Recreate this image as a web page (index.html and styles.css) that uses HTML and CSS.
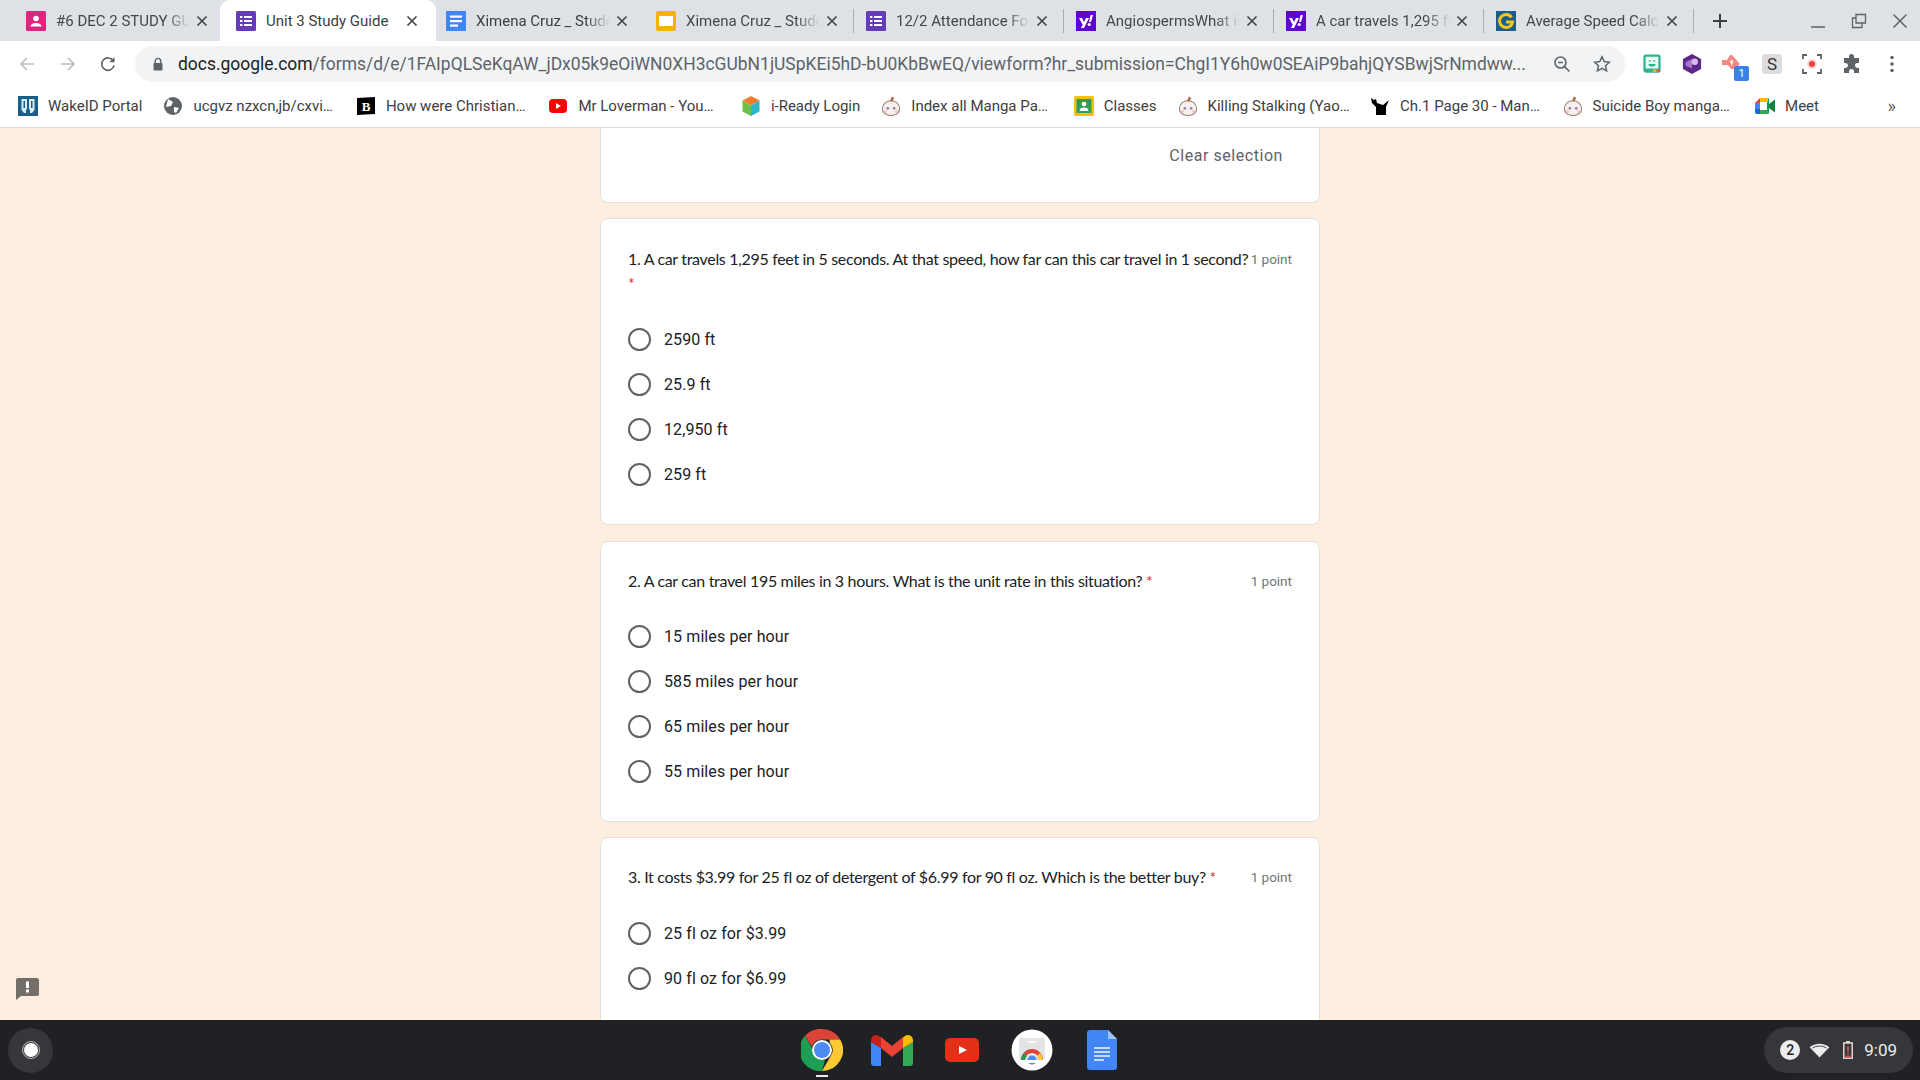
FILE: index.html
```html
<!DOCTYPE html>
<html>
<head>
    <meta charset="utf-8">
    <title>Unit 3 Study Guide</title>
    <link rel="stylesheet" href="styles.css">
</head>
<body>
<svg class="sprite" width="0" height="0">
    <symbol id="i-forms" viewBox="0 0 20 20"><rect width="20" height="20" rx="1.5" fill="#673ab7"/><g fill="#fff"><rect x="4" y="5" width="2.4" height="2"/><rect x="8" y="5" width="8" height="2"/><rect x="4" y="9" width="2.4" height="2"/><rect x="8" y="9" width="8" height="2"/><rect x="4" y="13" width="2.4" height="2"/><rect x="8" y="13" width="8" height="2"/></g></symbol>
    <symbol id="i-docs" viewBox="0 0 20 20"><rect width="20" height="24" y="-2" rx="2" fill="#4285f4"/><g fill="#fff"><rect x="4" y="4.5" width="12" height="2.2"/><rect x="4" y="9" width="12" height="2.2"/><rect x="4" y="13.5" width="8" height="2.2"/></g></symbol>
    <symbol id="i-yahoo" viewBox="0 0 20 20"><rect width="20" height="20" fill="#5f01d1"/><path d="M3 7h3l2 4 2-4h3l-5 10H5l1.7-3.2z" fill="#fff"/><path d="M14.5 4H17l-2 7h-2z" fill="#fff"/><circle cx="13.2" cy="13.5" r="1.6" fill="#fff"/></symbol>
    <symbol id="i-blob" viewBox="0 0 22 22"><path d="M11 5c5 0 9.500 4 9.500 9 0 5-4.500 7.500-9.500 7.500S1.500 19 1.500 14c0-5 4.500-9 9.500-9z" fill="#f8f0ec" stroke="#a08c83" stroke-width="1.300"/><path d="M10 5.500l2-5 2.500 1.500-2 4z" fill="#a9654b"/><circle cx="7.500" cy="13.500" r="1.500" fill="#8d83ad"/><circle cx="14.500" cy="13.500" r="1.500" fill="#8d83ad"/><circle cx="5" cy="17" r="1.600" fill="#f0c8c8"/><circle cx="17" cy="17" r="1.600" fill="#f0c8c8"/></symbol>
    <symbol id="i-close" viewBox="0 0 12 12"><path d="M1.5 1.5l9 9M10.5 1.5l-9 9" stroke="#45474a" stroke-width="1.7" fill="none"/></symbol>
</svg>

<div class="tabstrip">
    <div class="tab">
        <svg class="fav" viewBox="0 0 20 20"><rect width="20" height="20" rx="1.5" fill="#e0247f"/><circle cx="10" cy="7.5" r="2.8" fill="#fff"/><path d="M4.5 15.5c0-2.5 3-3.5 5.500-3.500s5.500 1 5.500 3.500z" fill="#fff"/></svg>
        <span class="tab-title">#6 DEC 2 STUDY GUIDE</span>
        <svg class="tab-x"><use href="#i-close"/></svg>
    </div>
    <div class="tab active">
        <svg class="fav"><use href="#i-forms"/></svg>
        <span class="tab-title">Unit 3 Study Guide</span>
        <svg class="tab-x"><use href="#i-close"/></svg>
    </div>
    <div class="tab no-sep">
        <svg class="fav"><use href="#i-docs"/></svg>
        <span class="tab-title">Ximena Cruz _ Student</span>
        <svg class="tab-x"><use href="#i-close"/></svg>
    </div>
    <div class="tab">
        <svg class="fav" viewBox="0 0 20 20"><rect width="20" height="20" y="0" rx="2" fill="#f4b400"/><rect x="3" y="5" width="14" height="10" rx="1" fill="#fff"/></svg>
        <span class="tab-title">Ximena Cruz _ Student</span>
        <svg class="tab-x"><use href="#i-close"/></svg>
    </div>
    <div class="tab">
        <svg class="fav"><use href="#i-forms"/></svg>
        <span class="tab-title">12/2 Attendance Form</span>
        <svg class="tab-x"><use href="#i-close"/></svg>
    </div>
    <div class="tab">
        <svg class="fav"><use href="#i-yahoo"/></svg>
        <span class="tab-title">AngiospermsWhat is</span>
        <svg class="tab-x"><use href="#i-close"/></svg>
    </div>
    <div class="tab">
        <svg class="fav"><use href="#i-yahoo"/></svg>
        <span class="tab-title">A car travels 1,295 feet</span>
        <svg class="tab-x"><use href="#i-close"/></svg>
    </div>
    <div class="tab">
        <svg class="fav" viewBox="0 0 20 20"><rect width="20" height="20" fill="#1b5e8c"/><path d="M15.500 6.500A6.500 6.500 0 1 0 16.500 11H10" fill="none" stroke="#f5c518" stroke-width="3"/></svg>
        <span class="tab-title">Average Speed Calculator</span>
        <svg class="tab-x"><use href="#i-close"/></svg>
    </div>
    <svg class="new-tab" viewBox="0 0 16 16"><path d="M8 1v14M1 8h14" stroke="#3c4043" stroke-width="2"/></svg>
    <div class="win-controls">
        <svg viewBox="0 0 16 16"><path d="M1 14h14" stroke="#5f6368" stroke-width="1.500"/></svg>
        <svg viewBox="0 0 16 16"><path d="M5 1.500h9.500V10H5zM5 5H1.500v9.500H11V10" fill="none" stroke="#5f6368" stroke-width="1.300"/></svg>
        <svg viewBox="0 0 16 16"><path d="M1.500 1.500l13 13M14.500 1.500l-13 13" stroke="#5f6368" stroke-width="1.500"/></svg>
    </div>
</div>

<div class="toolbar">
    <div class="nav-buttons">
        <svg viewBox="0 0 16 16"><path d="M15 8H2M8 2L2 8l6 6" fill="none" stroke="#babcbe" stroke-width="1.600"/></svg>
        <svg viewBox="0 0 16 16"><path d="M1 8h13M8 2l6 6-6 6" fill="none" stroke="#babcbe" stroke-width="1.600"/></svg>
        <svg viewBox="0 0 16 16"><path d="M13.300 5A6.200 6.200 0 1 0 14 9.300" fill="none" stroke="#5f6368" stroke-width="1.600"/><path d="M14.500 1v5.200H9.300z" fill="#5f6368"/></svg>
    </div>
    <div class="omnibox">
        <svg class="lock" viewBox="0 0 12 14"><path d="M3.200 6V4.200a2.800 2.800 0 0 1 5.600 0V6" fill="none" stroke="#5f6368" stroke-width="1.400"/><rect x="1.500" y="6" width="9" height="7.500" rx="1" fill="#5f6368"/></svg>
        <span class="url"><span class="host">docs.google.com</span>/forms/d/e/1FAIpQLSeKqAW_jDx05k9eOiWN0XH3cGUbN1jUSpKEi5hD-bU0KbBwEQ/viewform?hr_submission=ChgI1Y6h0w0SEAiP9bahjQYSBwjSrNmdww...</span>
        <svg class="omni-icon" viewBox="0 0 18 18"><circle cx="7.500" cy="7.500" r="5.500" fill="none" stroke="#5f6368" stroke-width="1.600"/><path d="M11.500 11.500l5 5M5 7.500h5" stroke="#5f6368" stroke-width="1.600"/></svg>
        <svg class="omni-icon" viewBox="0 0 18 18"><path d="M9 1.800l2.200 4.800 5.200.6-3.900 3.500 1.100 5.200L9 13.300l-4.600 2.600 1.100-5.200-3.900-3.500 5.200-.6z" fill="none" stroke="#5f6368" stroke-width="1.500"/></svg>
    </div>
    <div class="extensions">
        <svg viewBox="0 0 20 22"><rect x="0.500" y="0.500" width="19" height="20" rx="2.500" fill="#2bb58f"/><rect x="3" y="3" width="14" height="13" rx="1" fill="#e9f8f3"/><circle cx="7.500" cy="7.500" r="1" fill="#2bb58f"/><circle cx="12.500" cy="7.500" r="1" fill="#2bb58f"/><path d="M6 11h8c0 2-2 3-4 3s-4-1-4-3z" fill="#2bb58f"/><rect x="11" y="17" width="4" height="3" fill="#f3b32a"/><rect x="15" y="17" width="4" height="3" fill="#e8594a"/></svg>
        <svg viewBox="0 0 22 22"><path d="M11 0l10 5.500v11L11 22 1 16.500v-11z" fill="#5b2a86"/><path d="M4 9l7-3.500V16l-7-3z" fill="#a874cf"/><circle cx="14" cy="8.500" r="3.500" fill="#d7bdea"/></svg>
        <div class="ext-badged">
            <svg viewBox="0 0 20 20"><path d="M0 6h5l3-5h2l8 9-5 5H9l-3-4H0z" fill="#f28b82"/><path d="M8 6.500h3.500L9.500 12z" fill="#fff"/></svg>
            <span class="ext-badge">1</span>
        </div>
        <div class="ext-s">S</div>
        <svg viewBox="0 0 20 20"><path d="M1 5V1h4M15 1h4v4M19 15v4h-4M5 19H1v-4" fill="none" stroke="#5f6368" stroke-width="1.800"/><circle cx="10" cy="10" r="5" fill="#fbd5d2"/><circle cx="10" cy="10" r="3" fill="#e8453c"/></svg>
        <svg viewBox="0 0 20 20"><path d="M7 2.500a2.500 2.500 0 0 1 5 0V4h5v5h-1.500a2.500 2.500 0 0 0 0 5H17v5h-5v-1.500a2.500 2.500 0 0 0-5 0V19H2v-5h1.500a2.500 2.500 0 0 0 0-5H2V4h5z" fill="#5f6368"/></svg>
        <svg class="ext-menu" viewBox="0 0 4 18"><circle cx="2" cy="2.500" r="1.800" fill="#5f6368"/><circle cx="2" cy="9" r="1.800" fill="#5f6368"/><circle cx="2" cy="15.500" r="1.800" fill="#5f6368"/></svg>
    </div>
</div>

<div class="bookmarks">
    <div class="bm"><svg viewBox="0 0 20 20"><rect width="20" height="20" fill="#175e8a"/><path d="M3.500 3H9v10l-1 1v3H6l-2.500-3zM16.500 3H11v10l1 1v3h2l2.500-3z" fill="#dbe9f1"/><path d="M5.500 5h1.500v7H5.500zM13 5h1.500v7H13z" fill="#175e8a"/></svg><span>WakeID Portal</span></div>
    <div class="bm bm-long"><svg viewBox="0 0 20 20"><circle cx="10" cy="10" r="9" fill="#5f6368"/><path d="M5 3l5 3-2 4-5 1zM11 11l5 1-3 5-2-1z" fill="#fff"/></svg><span>ucgvz nzxcn,jb/cxvi…</span></div>
    <div class="bm bm-long"><svg viewBox="0 0 20 20"><path d="M1 2l18-1v17L1 19z" fill="#000"/><text x="10" y="15" text-anchor="middle" class="bm-b">B</text></svg><span>How were Christian…</span></div>
    <div class="bm bm-long"><svg viewBox="0 0 20 20"><rect x="1" y="3" width="18" height="14" rx="4" fill="#f00"/><path d="M8 7l5 3-5 3z" fill="#fff"/></svg><span>Mr Loverman - You…</span></div>
    <div class="bm"><svg viewBox="0 0 20 20"><path d="M10 0l8.500 4.500-8.500 5-8.500-5z" fill="#f47b30"/><path d="M1.500 4.500l8.500 5V20l-8.500-4.500z" fill="#6cbf4b"/><path d="M18.500 4.500l-8.500 5V20l8.500-4.500z" fill="#2fb5c9"/></svg><span>i-Ready Login</span></div>
    <div class="bm bm-long"><svg><use href="#i-blob"/></svg><span>Index all Manga Pa…</span></div>
    <div class="bm"><svg viewBox="0 0 20 20"><rect width="20" height="20" rx="1.500" fill="#f4c20d"/><rect x="2.500" y="3" width="15" height="14" fill="#2e9e5b"/><circle cx="10" cy="8" r="2.300" fill="#fff"/><path d="M5.500 15c0-2.500 2-3.500 4.500-3.500s4.500 1 4.500 3.500z" fill="#fff"/></svg><span>Classes</span></div>
    <div class="bm bm-long"><svg><use href="#i-blob"/></svg><span>Killing Stalking (Yao…</span></div>
    <div class="bm bm-long"><svg viewBox="0 0 20 20"><path d="M1 2l3 2 2-1 1 4 6 2 6-5-3 7v8H6v-8L2 7z" fill="#000"/></svg><span>Ch.1 Page 30 - Man…</span></div>
    <div class="bm bm-long"><svg><use href="#i-blob"/></svg><span>Suicide Boy manga…</span></div>
    <div class="bm"><svg viewBox="0 0 20 20"><path d="M5 2h8v4H5z" fill="#fbbc04"/><path d="M5 2L0 7h5z" fill="#ea4335"/><path d="M0 7h5v6H0z" fill="#4285f4"/><path d="M0 13h5v5H2a2 2 0 0 1-2-2z" fill="#1967d2"/><path d="M5 14h8v4H5z" fill="#34a853"/><path d="M13 2v4h-1v8h1v4a2 2 0 0 0 1-1l0-14a2 2 0 0 0-1-1z" fill="#0d9d58"/><path d="M14 8l6-4.500v13L14 12z" fill="#188038"/></svg><span>Meet</span></div>
    <span class="bm-more">»</span>
</div>

<main class="page">
    <section class="card card-clear">
        <button class="clear-btn">Clear selection</button>
    </section>

    <section class="card card-q1">
        <div class="q-head">
            <div class="q-text">1. A car travels 1,295 feet in 5 seconds. At that speed, how far can this car travel in 1 second? <span class="req">*</span></div>
            <div class="q-pts">1 point</div>
        </div>
        <div class="opts">
            <label class="opt"><span class="radio"></span>2590 ft</label>
            <label class="opt"><span class="radio"></span>25.9 ft</label>
            <label class="opt"><span class="radio"></span>12,950 ft</label>
            <label class="opt"><span class="radio"></span>259 ft</label>
        </div>
    </section>

    <section class="card">
        <div class="q-head">
            <div class="q-text">2. A car can travel 195 miles in 3 hours. What is the unit rate in this situation? <span class="req">*</span></div>
            <div class="q-pts">1 point</div>
        </div>
        <div class="opts">
            <label class="opt"><span class="radio"></span>15 miles per hour</label>
            <label class="opt"><span class="radio"></span>585 miles per hour</label>
            <label class="opt"><span class="radio"></span>65 miles per hour</label>
            <label class="opt"><span class="radio"></span>55 miles per hour</label>
        </div>
    </section>

    <section class="card card-q3">
        <div class="q-head">
            <div class="q-text">3. It costs $3.99 for 25 fl oz of detergent of $6.99 for 90 fl oz. Which is the better buy? <span class="req">*</span></div>
            <div class="q-pts">1 point</div>
        </div>
        <div class="opts">
            <label class="opt"><span class="radio"></span>25 fl oz for $3.99</label>
            <label class="opt"><span class="radio"></span>90 fl oz for $6.99</label>
        </div>
    </section>

    <svg class="feedback" viewBox="0 0 23 22"><path d="M2 0h19a2 2 0 0 1 2 2v14a2 2 0 0 1-2 2H5l-5 4V2a2 2 0 0 1 2-2z" fill="#746e68"/><rect x="10" y="3.500" width="3" height="6.500" fill="#fff"/><rect x="10" y="11.500" width="3" height="3" fill="#fff"/></svg>
</main>

<footer class="shelf">
    <div class="launcher"><span class="launcher-dot"></span></div>
    <div class="shelf-apps">
        <div class="app running">
            <svg viewBox="0 0 42 42">
                <path d="M21 0a21 21 0 0 1 18.200 10.500H21a10.500 10.500 0 0 0-10 7.300L4 6.800A21 21 0 0 1 21 0z" fill="#db4437"/>
                <path d="M39.200 10.500A21 21 0 0 1 21 42l9.100-15.700A10.500 10.500 0 0 0 29 14l-.5-3.500z" fill="#fcc934"/>
                <path d="M21 42A21 21 0 0 1 4 6.800l9 15.700A10.500 10.500 0 0 0 24 31z" fill="#1e9e55"/>
                <circle cx="21" cy="21" r="10" fill="#fff"/><circle cx="21" cy="21" r="8" fill="#4c8bf5"/>
            </svg>
        </div>
        <div class="app">
            <svg viewBox="0 0 42 32">
                <path d="M0 8v21a3 3 0 0 0 3 3h7V14z" fill="#4285f4"/>
                <path d="M32 14v18h7a3 3 0 0 0 3-3V8z" fill="#34a853"/>
                <path d="M10 3l11 9 11-9v11l-11 9-11-9z" fill="#ea4335"/>
                <path d="M0 6a5 5 0 0 1 8-4l2 1.500V14L0 8z" fill="#c5221f"/>
                <path d="M42 6a5 5 0 0 0-8-4l-2 1.500V14l10-6z" fill="#fbbc04"/>
            </svg>
        </div>
        <div class="app">
            <svg viewBox="0 0 34 24"><rect width="34" height="24" rx="5" fill="#e62f17"/><path d="M14 8l8 4-8 4z" fill="#fff"/></svg>
        </div>
        <div class="app">
            <svg viewBox="0 0 42 42">
                <circle cx="21" cy="21" r="20.500" fill="#fff"/>
                <rect x="8" y="9" width="26" height="24" fill="#e3e4e5"/>
                <rect x="17" y="12" width="8" height="1.500" fill="#fff"/>
                <path d="M10 31a11 11 0 0 1 22 0h-4a7 7 0 0 0-14 0z" fill="#db4437"/>
                <path d="M10 31a11 11 0 0 1 3-7l3 3a7 7 0 0 0-2 4z" fill="#1e9e55"/>
                <path d="M29 24a11 11 0 0 1 3 7h-4a7 7 0 0 0-2-4z" fill="#fcc934"/>
                <circle cx="21" cy="31" r="4.500" fill="#4c8bf5"/>
                <rect x="8" y="31" width="26" height="3" fill="#fff"/>
            </svg>
        </div>
        <div class="app">
            <svg viewBox="0 0 30 40">
                <path d="M3 0h18l9 9v28a3 3 0 0 1-3 3H3a3 3 0 0 1-3-3V3a3 3 0 0 1 3-3z" fill="#4285f4"/>
                <path d="M21 0l9 9h-9z" fill="#a1c2fa"/>
                <path d="M7 18h16M7 22h16M7 26h16M7 30h10" stroke="#f1f3f4" stroke-width="1.600"/>
            </svg>
        </div>
    </div>
    <div class="tray">
        <span class="tray-count">2</span>
        <svg class="tray-wifi" viewBox="0 0 22 16"><path d="M11 15.500L0.500 4.500C6 -0.500 16 -0.500 21.500 4.500z" fill="#eceded"/><path d="M3.500 5.500c4-3 11-3 15 0" fill="none" stroke="#35373b" stroke-width="1"/></svg>
        <svg class="tray-batt" viewBox="0 0 10 18"><rect x="3" y="0" width="4" height="2" fill="#e4d9d9"/><rect x="0.800" y="2" width="8.400" height="15.200" fill="none" stroke="#e4d9d9" stroke-width="1.500"/><rect x="1.500" y="14.500" width="7" height="2" fill="#c9504a"/><rect x="4.200" y="5" width="1.600" height="5.500" fill="#e25b52"/><rect x="4.200" y="11.500" width="1.600" height="1.600" fill="#e25b52"/></svg>
        <span class="tray-time">9:09</span>
    </div>
</footer>
</body>
</html>
```

FILE: styles.css
```css
* {
    box-sizing: border-box;
}
html, body {
    margin: 0;
    height: 100%;
}
body {
    display: flex;
    flex-direction: column;
    overflow: hidden;
    font-family: Roboto, "Liberation Sans", sans-serif;
    color: #202124;
    background-color: #fdeee0;
}
.sprite {
    position: absolute;
}

/* tabs */
.tabstrip {
    display: flex;
    align-items: center;
    height: 41px;
    padding-left: 14px;
    background-color: #dee1e6;
}
.tab {
    position: relative;
    display: flex;
    align-items: center;
    flex: none;
    width: 210px;
    height: 41px;
    padding: 0 16px 0 12px;
    font-size: 15px;
    color: #45474a;
}
.tab::after {
    content: "";
    position: absolute;
    right: 0;
    top: 9px;
    width: 1px;
    height: 24px;
    background-color: #a9acb0;
}
.tab.active, .tab.no-sep {
    color: #3c4043;
}
.tab.active {
    width: 216px;
    margin: 0 -2px 0 -4px;
    padding: 0 18px 0 16px;
    background-color: #fff;
    border-radius: 10px 10px 0 0;
}
.tab.active::after, .tab.no-sep::after, .tab:first-child::after {
    display: none;
}
.fav {
    flex: none;
    width: 20px;
    height: 20px;
}
.tab-title {
    flex: 1;
    margin-left: 10px;
    overflow: hidden;
    white-space: nowrap;
    -webkit-mask-image: linear-gradient(to right, #000 82%, transparent 100%);
    mask-image: linear-gradient(to right, #000 82%, transparent 100%);
}
.tab.active .tab-title {
    -webkit-mask-image: none;
    mask-image: none;
}
.tab-x {
    flex: none;
    width: 12px;
    height: 12px;
    margin-left: 6px;
}
.new-tab {
    flex: none;
    width: 16px;
    height: 16px;
    margin-left: 18px;
}
.win-controls {
    display: flex;
    align-items: center;
    gap: 25px;
    margin-left: auto;
    padding-right: 12px;
}
.win-controls svg {
    width: 16px;
    height: 16px;
}

/* toolbar */
.toolbar {
    display: flex;
    align-items: center;
    height: 46px;
    padding-bottom: 1px;
    background-color: #fff;
}
.nav-buttons {
    display: flex;
    align-items: center;
    gap: 25px;
    width: 135px;
    padding-left: 19px;
}
.nav-buttons svg {
    width: 16px;
    height: 16px;
}
.nav-buttons svg:last-child {
    margin-left: -1px;
}
.omnibox {
    display: flex;
    align-items: center;
    width: 1490px;
    height: 36px;
    padding: 0 14px 0 17px;
    border-radius: 18px;
    background-color: #f1f3f4;
}
.lock {
    flex: none;
    width: 12px;
    height: 14px;
}
.url {
    flex: 1;
    margin-left: 14px;
    overflow: hidden;
    white-space: nowrap;
    font-size: 17.470px;
    color: #5f6368;
}
.host {
    color: #202124;
}
.omni-icon {
    flex: none;
    width: 18px;
    height: 18px;
    margin-left: 22px;
}
.extensions {
    display: flex;
    align-items: center;
    gap: 20px;
    padding-left: 17px;
}
.extensions > svg {
    width: 20px;
    height: 20px;
}
.extensions > svg.ext-menu {
    width: 4px;
    height: 18px;
    margin-left: 8px;
}
.ext-badged {
    position: relative;
    width: 20px;
    height: 20px;
}
.ext-badged svg {
    width: 20px;
    height: 20px;
}
.ext-badge {
    position: absolute;
    left: 12px;
    top: 12px;
    width: 15px;
    height: 15px;
    border-radius: 2px;
    background-color: #3b82e8;
    color: #fff;
    font-size: 11px;
    line-height: 15px;
    text-align: center;
}
.ext-s {
    width: 20px;
    height: 20px;
    border-radius: 4px;
    background-color: #dcdcdc;
    font-size: 17px;
    line-height: 20px;
    text-align: center;
    color: #333;
}

/* bookmarks */
.bookmarks {
    display: flex;
    align-items: center;
    gap: 21px;
    height: 41px;
    padding: 0 24px 3px 18px;
    background-color: #fff;
    border-bottom: 1px solid #e4ddd5;
    font-size: 15px;
    color: #3c4043;
}
.bm {
    display: flex;
    align-items: center;
    gap: 10px;
    white-space: nowrap;
}
.bm-long {
    width: 171.500px;
}
.bm svg {
    flex: none;
    width: 20px;
    height: 20px;
}
.bm-b {
    font-family: "Liberation Serif", serif;
    font-size: 13px;
    font-weight: bold;
    fill: #fff;
}
.bm-more {
    margin-left: auto;
    font-size: 18px;
    color: #5f6368;
}

/* form */
.page {
    position: relative;
    flex: 1;
    min-height: 0;
    overflow: hidden;
    display: flex;
    flex-direction: column;
    align-items: center;
    gap: 15px;
}
.card {
    flex: none;
    width: 720px;
    padding: 27px 27px 27px;
    background-color: #fff;
    border: 1px solid #e6dfd8;
    border-radius: 8px;
}
.card-clear {
    display: flex;
    justify-content: flex-end;
    height: 75px;
    padding: 15px 36px 0 0;
    border-top: 0;
    border-radius: 0 0 8px 8px;
}
.card-q1 {
    margin-bottom: 1px;
    padding-top: 28px;
}
.card-q1 .opts, .card-q3 .opts {
    margin-top: 22px;
}
.clear-btn {
    height: 24px;
    padding: 0;
    border: 0;
    background: none;
    font-family: Roboto, sans-serif;
    font-size: 16px;
    letter-spacing: 0.55px;
    color: #5f6368;
}
.q-head {
    display: flex;
    justify-content: space-between;
    gap: 2px;
}
.q-text {
    font-family: Lato, "Liberation Sans", sans-serif;
    font-size: 16px;
    line-height: 24px;
    letter-spacing: -0.32px;
    color: #202124;
}
.req {
    color: #d93025;
}
.q-pts {
    flex: none;
    font-size: 13.500px;
    line-height: 24px;
    color: #70757a;
}
.opts {
    margin-top: 21px;
}
.opt {
    display: flex;
    align-items: center;
    gap: 13px;
    height: 45px;
    font-size: 16px;
    letter-spacing: 0.1px;
    color: #202124;
}
.radio {
    flex: none;
    width: 23px;
    height: 23px;
    border: 2px solid #5f6368;
    border-radius: 50%;
}
.feedback {
    position: absolute;
    left: 16px;
    top: 850px;
    width: 23px;
    height: 22px;
}

/* chromeos shelf */
.shelf {
    position: relative;
    display: flex;
    align-items: center;
    flex: none;
    height: 60px;
    background-color: #1f2125;
}
.launcher {
    display: flex;
    align-items: center;
    justify-content: center;
    width: 45px;
    height: 45px;
    margin-left: 8px;
    border-radius: 50%;
    background-color: #35373b;
}
.launcher-dot {
    width: 14px;
    height: 14px;
    border-radius: 50%;
    background-color: #fff;
    outline: 1.500px solid #bbb;
    outline-offset: 1.500px;
}
.shelf-apps {
    position: absolute;
    left: 787px;
    top: 0;
    display: flex;
}
.app {
    position: relative;
    display: flex;
    align-items: center;
    justify-content: center;
    width: 70px;
    height: 60px;
}
.app svg {
    display: block;
}
.app:nth-child(1) svg, .app:nth-child(4) svg {
    width: 42px;
    height: 42px;
}
.app:nth-child(2) svg {
    width: 42px;
    height: 32px;
}
.app:nth-child(3) svg {
    width: 34px;
    height: 24px;
}
.app:nth-child(5) svg {
    width: 30px;
    height: 40px;
}
.app.running::after {
    content: "";
    position: absolute;
    left: 29px;
    bottom: 3px;
    width: 12px;
    height: 2px;
    background-color: #e8eaed;
}
.tray {
    display: flex;
    align-items: center;
    height: 46px;
    margin-left: auto;
    margin-right: 7px;
    padding: 0 16px;
    border-radius: 23px;
    background-color: #35373b;
    color: #eceded;
}
.tray-count {
    width: 20px;
    height: 20px;
    border-radius: 50%;
    background-color: #eceded;
    color: #1f2125;
    font-size: 14px;
    font-weight: 500;
    line-height: 20px;
    text-align: center;
}
.tray-wifi {
    width: 21px;
    height: 15px;
    margin-left: 9px;
}
.tray-batt {
    width: 10px;
    height: 18px;
    margin-left: 13px;
}
.tray-time {
    margin-left: 11px;
    font-size: 17px;
}
```
